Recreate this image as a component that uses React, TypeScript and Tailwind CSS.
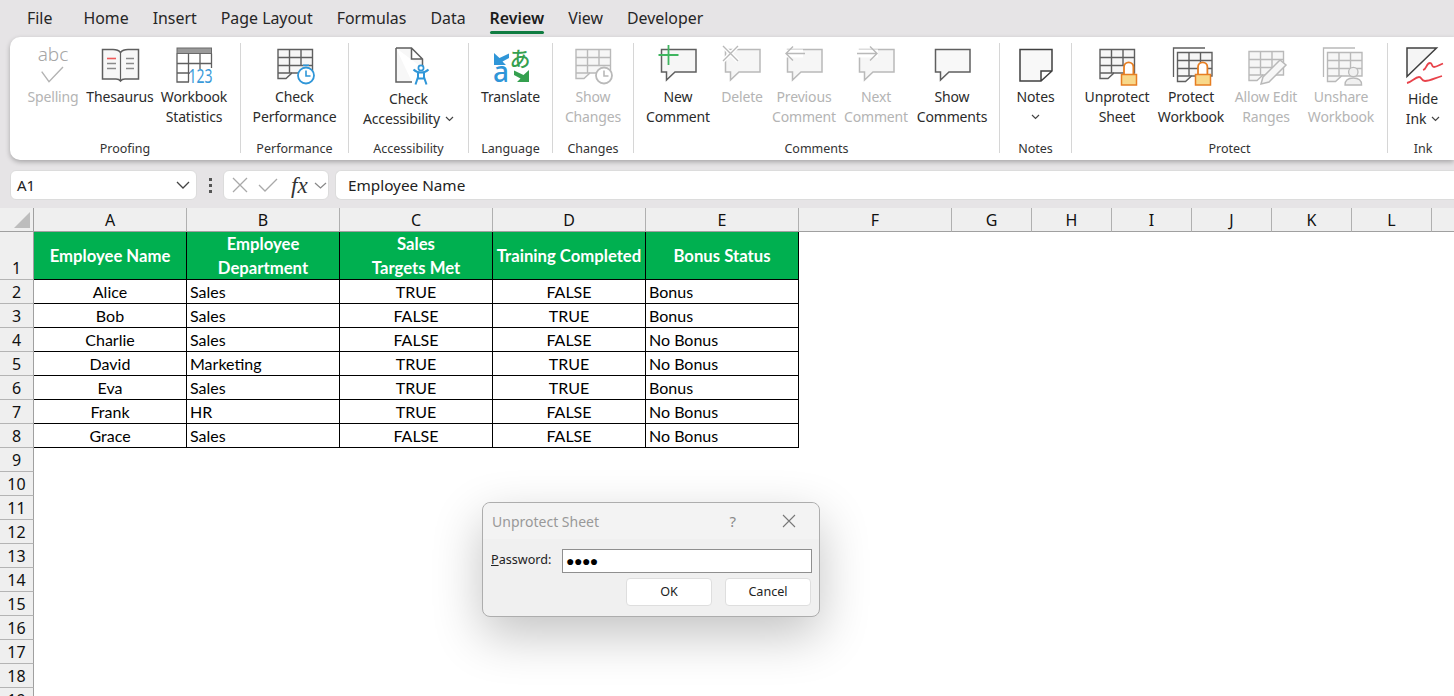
import type { ReactNode } from "react";

const DARK = "#5f5f5f";
const MUTED = "#b9b9b9";
const BLUE = "#2f96d8";

function SheetGrid({ c, fill = "#f6f6f6", x = 7, short = false }: { c: string; fill?: string; x?: number; short?: boolean }) {
  const r = 41.5;
  const mid1 = x + (r - x) / 3;
  const mid2 = x + ((r - x) * 2) / 3;
  return (
    <g fill="none" stroke={c} strokeWidth="1.4">
      <path d={`M${x} 5.5H${r}V29H21L15 34.5H${x}Z`} fill={fill} />
      <path d={`M${x} 13.5H${r}M${x} 21.5H${r}M${x} 29H21M${mid1} 5.5V29M${mid2} 5.5V${short ? 22 : 29}`} />
    </g>
  );
}

function Lock() {
  return (
    <g>
      <path d="M31 30.5V23a4.7 4.7 0 0 1 9.4 0v7.5" fill="#fff" stroke="#e67e22" strokeWidth="1.8" />
      <rect x="28.5" y="30.5" width="15" height="10.5" fill="#f8d88a" stroke="#e67e22" strokeWidth="1.5" />
    </g>
  );
}

function Bubble({ c, fill = "#f6f6f6" }: { c: string; fill?: string }) {
  return <path d="M7.5 5.5H42V28H21L12.5 36V28H7.5Z" fill={fill} stroke={c} strokeWidth="1.5" />;
}

const icons: Record<string, ReactNode> = {
  spelling: (
    <>
      <text x="24" y="17" textAnchor="middle" fontSize="19" fill="#a6a6a6" fontFamily="Noto Sans, sans-serif" fontWeight="300">abc</text>
      <path d="M12.7 27.7L20 37.7 34 23" fill="none" stroke="#b3b3b3" strokeWidth="1.4" />
    </>
  ),
  thesaurus: (
    <>
      <path d="M6.5 5.5H17c3.5 0 6 1 7.5 3 1.5-2 4-3 7.5-3h10.5v29.5H29c-2 0-3.5.5-4.5 2-1-1.5-2.5-2-4.5-2H6.5z" fill="#f7f7f7" stroke={DARK} strokeWidth="1.5" />
      <path d="M24.5 8.5V36" stroke={DARK} strokeWidth="1.2" />
      <path d="M11 14.5h9" stroke="#ee5a5a" strokeWidth="1.6" />
      <path d="M11 19.5h9M11 24.5h9M30 14.5h8M30 19.5h8M30 24.5h8" stroke="#8a8a8a" strokeWidth="1.3" />
    </>
  ),
  stats: (
    <>
      <rect x="7" y="4" width="34.5" height="5.5" fill="#9a9a9a" stroke="#6a6a6a" />
      <path d="M7 9.5V38H19M41.5 9.5V24M18.5 9.5V38M30 9.5V25M7 19.5H41.5M7 29H20" fill="none" stroke={DARK} strokeWidth="1.3" />
      <text x="18.5" y="39" fontSize="19" fill="#3a9ad9" fontFamily="Noto Sans, sans-serif" fontWeight="400" textLength="24" lengthAdjust="spacingAndGlyphs">123</text>
    </>
  ),
  performance: (
    <>
      <SheetGrid c={DARK} short />
      <circle cx="35" cy="31.5" r="8" fill="#fff" stroke={BLUE} strokeWidth="1.8" />
      <path d="M35 26.5V32H39.5M32 21.2H38" fill="none" stroke={BLUE} strokeWidth="1.6" />
    </>
  ),
  accessibility: (
    <>
      <path d="M11 4H26.5L37.5 15V24M26.5 4V15H37.5M11 4V38H27" fill="#f7f7f7" stroke={DARK} strokeWidth="1.5" />
      <circle cx="36" cy="24" r="2.6" fill="#fff" stroke={BLUE} strokeWidth="1.7" />
      <path d="M28.5 25.5c2 2 5 3 7.500 3s5.500-1 7.500-3M33 29v4l-2.500 7.500M39 29v4l2.500 7.500M33 34.500h6" fill="none" stroke={BLUE} strokeWidth="2" />
    </>
  ),
  translate: (
    <>
      <polygon points="7,9 7,21 19,21 15.5,17.5 22,14 22,9.5 12.5,14" fill={BLUE} />
      <polygon points="42,26 42,38 30,38 33.5,34.5 27,31 27,26.5 36.5,31" fill="#35a04f" />
      <text x="14" y="38" textAnchor="middle" fontSize="28" fontWeight="500" fill={BLUE} fontFamily="Noto Sans, sans-serif">a</text>
      <text x="33" y="22" textAnchor="middle" fontSize="21" fontWeight="500" fill="#35a04f" fontFamily="Noto Sans CJK JP, sans-serif">あ</text>
    </>
  ),
  changes: (
    <>
      <SheetGrid c={MUTED} short />
      <circle cx="35" cy="31.5" r="8" fill="#fff" stroke={MUTED} strokeWidth="1.8" />
      <path d="M35 26.5V32H39.5" fill="none" stroke={MUTED} strokeWidth="1.6" />
    </>
  ),
  newComment: (
    <>
      <Bubble c={DARK} />
      <path d="M14.5 1v20M4.500 11h20" stroke="#3fb55f" strokeWidth="1.8" />
    </>
  ),
  deleteComment: (
    <>
      <Bubble c={MUTED} />
      <path d="M5 2l15 15M20 2L5 17" stroke="#fff" strokeWidth="4" />
      <path d="M5 2l15 15M20 2L5 17" stroke={MUTED} strokeWidth="1.4" />
    </>
  ),
  previous: (
    <>
      <Bubble c={MUTED} />
      <path d="M5 9.5H23" stroke="#fff" strokeWidth="8" />
      <path d="M13 2.5L6 9.5l7 7M6 9.5H25" fill="none" stroke={MUTED} strokeWidth="1.4" />
    </>
  ),
  next: (
    <>
      <Bubble c={MUTED} />
      <path d="M5 9.5H26" stroke="#fff" strokeWidth="8" />
      <path d="M18 2.5l7 7-7 7M25 9.5H5" fill="none" stroke={MUTED} strokeWidth="1.4" />
    </>
  ),
  showComments: <Bubble c={DARK} fill="#f8f8f8" />,
  notes: <path d="M8 5.5H40V27L29 37H8ZM40 27H29V37" fill="#f8f8f8" stroke="#404040" strokeWidth="1.5" />,
  unprotect: (
    <>
      <SheetGrid c={DARK} short />
      <Lock />
    </>
  ),
  protect: (
    <>
      <path d="M6.500 33V4H38" fill="none" stroke={DARK} strokeWidth="1.3" />
      <g transform="translate(3.5 3)">
        <SheetGrid c={DARK} x={7} short />
      </g>
      <Lock />
    </>
  ),
  allowEdit: (
    <>
      <g transform="translate(0 2)">
        <SheetGrid c={MUTED} short />
      </g>
      <polygon points="19,40 21,33 38,16 44,21 27,38" fill="#f7f7f7" stroke={MUTED} strokeWidth="1.5" />
    </>
  ),
  unshare: (
    <>
      <path d="M6.500 33V4H38" fill="none" stroke={MUTED} strokeWidth="1.3" />
      <g transform="translate(3.5 3)">
        <SheetGrid c={MUTED} short />
      </g>
      <path d="M28 41c0-5 3-7 8.300-7s8.300 2 8.300 7z" fill="#f0f0f0" stroke={MUTED} strokeWidth="1.3" />
      <circle cx="36.3" cy="28" r="4.7" fill="#f0f0f0" stroke={MUTED} strokeWidth="1.3" />
    </>
  ),
  ink: (
    <>
      <path d="M8 4H37.500L8 32.500Z" fill="#f5f5f5" stroke="#404040" strokeWidth="1.5" />
      <path d="M24 26c4-1 3-7 7-7 3 0 1 4 4 4 3 0 5-2 9-3.500M8 39c5-1 8-6 12-6 3 0 2 4 6 4 5 0 10-3 17-5" fill="none" stroke="#e8434b" strokeWidth="1.8" />
    </>
  ),
};

type Btn = { icon: string; lines: string[]; w: string; off?: boolean; drop?: boolean; low?: boolean };
type Group = { label: string; w: string; pl?: string; labelMl?: string; buttons: Btn[] };

const groups: Group[] = [
  {
    label: "Proofing",
    w: "w-[231px]",
    pl: "pl-[10px]",
    labelMl: "-ml-[10px]",
    buttons: [
      { icon: "spelling", lines: ["Spelling"], w: "w-[66px]", off: true },
      { icon: "thesaurus", lines: ["Thesaurus"], w: "w-[68px]" },
      { icon: "stats", lines: ["Workbook", "Statistics"], w: "w-[80px]" },
    ],
  },
  { label: "Performance", w: "w-[108px]", buttons: [{ icon: "performance", lines: ["Check", "Performance"], w: "w-[107px]" }] },
  { label: "Accessibility", w: "w-[120px]", buttons: [{ icon: "accessibility", lines: ["Check", "Accessibility"], w: "w-[119px]", drop: true, low: true }] },
  { label: "Language", w: "w-[84px]", buttons: [{ icon: "translate", lines: ["Translate"], w: "w-[83px]" }] },
  { label: "Changes", w: "w-[81px]", buttons: [{ icon: "changes", lines: ["Show", "Changes"], w: "w-[80px]", off: true }] },
  {
    label: "Comments",
    w: "w-[366px]",
    pl: "pl-[11px]",
    labelMl: "-ml-[11px]",
    buttons: [
      { icon: "newComment", lines: ["New", "Comment"], w: "w-[66px]" },
      { icon: "deleteComment", lines: ["Delete"], w: "w-[62px]", off: true },
      { icon: "previous", lines: ["Previous", "Comment"], w: "w-[62px]", off: true },
      { icon: "next", lines: ["Next", "Comment"], w: "w-[82px]", off: true },
      { icon: "showComments", lines: ["Show", "Comments"], w: "w-[70px]" },
    ],
  },
  { label: "Notes", w: "w-[72px]", buttons: [{ icon: "notes", lines: ["Notes", ""], w: "w-[71px]", drop: true }] },
  {
    label: "Protect",
    w: "w-[316px]",
    pl: "pl-[8px]",
    labelMl: "-ml-[8px]",
    buttons: [
      { icon: "unprotect", lines: ["Unprotect", "Sheet"], w: "w-[74px]" },
      { icon: "protect", lines: ["Protect", "Workbook"], w: "w-[74px]" },
      { icon: "allowEdit", lines: ["Allow Edit", "Ranges"], w: "w-[76px]", off: true },
      { icon: "unshare", lines: ["Unshare", "Workbook"], w: "w-[74px]", off: true },
    ],
  },
  { label: "Ink", w: "w-[70px]", buttons: [{ icon: "ink", lines: ["Hide", "Ink"], w: "w-[70px]", drop: true, low: true }] },
];

const tabs = ["Home", "Insert", "Page Layout", "Formulas", "Data", "Review", "View", "Developer"];

// M sits past the window edge, its label can't be seen
const columns = ["A", "B", "C", "D", "E", "F", "G", "H", "I", "J", "K", "L", ""];

const headers = [["Employee Name"], ["Employee", "Department"], ["Sales", "Targets Met"], ["Training Completed"], ["Bonus Status"]];

const rows = [
  ["Alice", "Sales", "TRUE", "FALSE", "Bonus"],
  ["Bob", "Sales", "FALSE", "TRUE", "Bonus"],
  ["Charlie", "Sales", "FALSE", "FALSE", "No Bonus"],
  ["David", "Marketing", "TRUE", "TRUE", "No Bonus"],
  ["Eva", "Sales", "TRUE", "TRUE", "Bonus"],
  ["Frank", "HR", "TRUE", "FALSE", "No Bonus"],
  ["Grace", "Sales", "FALSE", "FALSE", "No Bonus"],
];

function Chevron() {
  return (
    <svg width="9" height="6" viewBox="0 0 9 6">
      <path d="M1 1l3.500 3.500L8 1" fill="none" stroke="#444" strokeWidth="1.2" />
    </svg>
  );
}

function RibbonButton({ b }: { b: Btn }) {
  return (
    <div className={`${b.w} flex shrink-0 flex-col items-center pt-px`}>
      <svg width="48" height="44" viewBox="0 0 48 44" className="shrink-0 overflow-visible">
        {icons[b.icon]}
      </svg>
      <div className={`${b.low ? "mt-px" : "-mt-px"} ${b.off ? "text-[#b4b4b4]" : "text-[#2b2b2b]"} text-center text-[14px] leading-[20px] tracking-[-0.15px] whitespace-nowrap`}>
        {b.lines.map((line, i) => {
          const last = i === b.lines.length - 1;
          return (
            <div key={i} className="flex h-5 items-center justify-center gap-[5px]">
              {line}
              {b.drop && last && <Chevron />}
            </div>
          );
        })}
      </div>
    </div>
  );
}

function Ribbon() {
  return (
    <div className="ml-[10px] flex h-[123px] items-start rounded-l-[10px] bg-white pt-[6px] shadow-[0_2px_5px_rgba(0,0,0,0.28)]">
      {groups.map((g, i) => (
        <div key={g.label} className={`${g.w} ${g.pl ?? ""} ${i < groups.length - 1 ? "border-r border-[#d6d6d6]" : ""} h-[110px] shrink-0`}>
          <div className="flex h-[99px] items-start">
            {g.buttons.map((b) => (
              <RibbonButton key={b.icon} b={b} />
            ))}
          </div>
          <div className={`${g.labelMl ?? ""} text-center text-[12.5px] leading-[14px] text-[#333]`}>{g.label}</div>
        </div>
      ))}
    </div>
  );
}

function FormulaBar() {
  return (
    <div className="mt-[10px] flex h-[30px] items-stretch">
      <div className="ml-[10px] flex w-[187px] items-center justify-between rounded-[6px] border border-[#dcdcdc] bg-white px-[6px] text-[15px] text-[#222]">
        A1
        <svg width="14" height="8" viewBox="0 0 14 8">
          <path d="M1 1l6 6 6-6" fill="none" stroke="#444" strokeWidth="1.3" />
        </svg>
      </div>
      <div className="flex w-[26px] flex-col items-center justify-center gap-[3px]">
        <span className="h-[3px] w-[3px] bg-[#555]" />
        <span className="h-[3px] w-[3px] bg-[#555]" />
        <span className="h-[3px] w-[3px] bg-[#555]" />
      </div>
      <div className="flex w-[106px] items-center rounded-[6px] border border-[#dcdcdc] bg-white pl-[8px]">
        <svg width="16" height="16" viewBox="0 0 16 16">
          <path d="M1 1l14 14M15 1L1 15" stroke="#a9a9a9" strokeWidth="1.3" />
        </svg>
        <svg width="20" height="16" viewBox="0 0 20 16" className="ml-[10px]">
          <path d="M1 8l6 6L19 2" fill="none" stroke="#a9a9a9" strokeWidth="1.3" />
        </svg>
        <span className="ml-[13px] font-['Liberation_Serif',serif] text-[23px] leading-none text-[#333] italic">fx</span>
        <svg width="13" height="7" viewBox="0 0 13 7" className="ml-[6px]">
          <path d="M1 1l5.500 5 5.500-5" fill="none" stroke="#888" strokeWidth="1.2" />
        </svg>
      </div>
      <div className="ml-[6px] flex flex-1 items-center rounded-l-[6px] border border-r-0 border-[#dcdcdc] bg-white pl-[12px] text-[15.3px] text-[#222]">
        Employee Name
      </div>
    </div>
  );
}

function Sheet() {
  const cell = "flex items-center border-r border-b border-black whitespace-nowrap";
  const rowHead = "flex items-end justify-center border-r border-b border-r-[#a0a0a0] border-b-[#b4b4b4] bg-[#efefef] font-['Noto_Sans',sans-serif] text-[16px] leading-[22px] text-[#111]";
  return (
    <div className="mt-2 grid grid-cols-[34px_repeat(6,153px)_repeat(7,80px)] grid-rows-[24px_48px_repeat(18,24px)] bg-white font-['Lato',sans-serif] text-[16px] text-black">
      <div className="flex items-end justify-end border-r border-b border-r-[#a0a0a0] border-b-[#a0a0a0] bg-[#efefef] pr-[3px] pb-[3px]">
        <svg width="16" height="16" viewBox="0 0 16 16">
          <polygon points="0,16 16,0 16,16" fill="#bdbdbd" />
        </svg>
      </div>
      {columns.map((c, i) => (
        <div key={i} className="flex items-center justify-center border-r border-b border-r-[#b0b0b0] border-b-[#a0a0a0] bg-[#efefef] font-['Noto_Sans',sans-serif] text-[16px] text-[#111]">
          {c}
        </div>
      ))}

      <div className={rowHead}>1</div>
      {headers.map((h) => (
        <div key={h[0]} className="flex flex-col items-center justify-center border-r border-b border-black bg-[#00b050] text-[16.7px] leading-[24px] font-bold whitespace-nowrap text-white">
          {h.map((line) => (
            <div key={line}>{line}</div>
          ))}
        </div>
      ))}
      <div className="col-span-8" />

      {rows.map((r, i) => (
        <div key={r[0]} className="contents">
          <div className={rowHead}>{i + 2}</div>
          <div className={`${cell} justify-center`}>{r[0]}</div>
          <div className={`${cell} pl-[3px]`}>{r[1]}</div>
          <div className={`${cell} justify-center`}>{r[2]}</div>
          <div className={`${cell} justify-center`}>{r[3]}</div>
          <div className={`${cell} pl-[3px]`}>{r[4]}</div>
          <div className="col-span-8" />
        </div>
      ))}

      {[9, 10, 11, 12, 13, 14, 15, 16, 17, 18, 19].map((n) => (
        <div key={n} className="contents">
          <div className={rowHead}>{n}</div>
          <div className="col-span-13" />
        </div>
      ))}
    </div>
  );
}

function Dialog() {
  return (
    <div className="absolute top-[502px] left-[482px] flex h-[115px] w-[338px] flex-col rounded-[8px] border border-[#adadad] bg-[#f0f0f0] shadow-[0_18px_50px_rgba(0,0,0,0.24)]">
      <div className="flex h-[36px] items-center rounded-t-[8px] bg-[#f3f3f3] pr-[23px] pl-[9px] text-[14px] text-[#999]">
        <span className="flex-1">Unprotect Sheet</span>
        <span className="mr-[46px] text-[15px] text-[#8a8a8a]">?</span>
        <svg width="14" height="14" viewBox="0 0 14 14">
          <path d="M1 1l12 12M13 1L1 13" stroke="#777" strokeWidth="1.1" />
        </svg>
      </div>
      <div className="mt-[10px] flex h-[24px] items-center pr-[7px] pl-[8px]">
        <span className="w-[71px] -translate-y-px text-[12.6px] text-[#222]">
          <span className="underline">P</span>assword:
        </span>
        <div className="flex h-[24px] flex-1 items-center border border-[#8f8f8f] bg-white pl-[3px] text-[14px] leading-none tracking-[-0.5px] text-black">
          ●●●●
        </div>
      </div>
      <div className="mt-[5px] flex justify-end gap-[13px] pr-[8px]">
        <button className="h-[28px] w-[86px] rounded-[4px] border border-[#dedede] bg-white pt-px text-[12.6px] text-[#222]">OK</button>
        <button className="h-[28px] w-[86px] rounded-[4px] border border-[#dedede] bg-white pt-px text-[12.6px] text-[#222]">Cancel</button>
      </div>
    </div>
  );
}

export default function App() {
  return (
    <div className="relative h-[696px] w-[1454px] overflow-hidden bg-[#e6e4e6] font-['Noto_Sans',sans-serif]">
      <div className="flex h-[37px] items-start pt-[7px] pl-[27px] text-[15.9px] leading-[22px] text-[#262626]">
        <span className="mr-[31px]">File</span>
        <div className="flex gap-[24px]">
          {tabs.map((t) => (
            <div key={t} className={`relative ${t === "Review" ? "font-semibold text-[#1c1c1c]" : ""}`}>
              {t}
              {t === "Review" && <div className="absolute top-[24px] right-0 left-0 h-[3px] rounded-[2px] bg-[#107c41]" />}
            </div>
          ))}
        </div>
      </div>
      <Ribbon />
      <FormulaBar />
      <Sheet />
      <Dialog />
    </div>
  );
}
